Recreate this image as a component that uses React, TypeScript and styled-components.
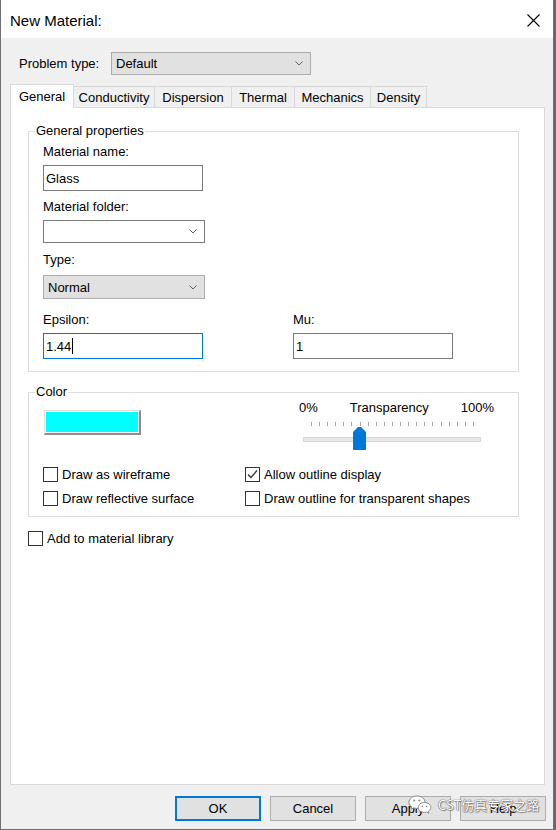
import React from "react";
import styled, { createGlobalStyle } from "styled-components";

const GlobalStyle = createGlobalStyle`
  html, body {
    margin: 0;
    padding: 0;
  }
  body {
    background: #5f6b70;
    font-family: "Liberation Sans", Arial, sans-serif;
    font-size: 13px;
    color: #000;
  }
  * {
    box-sizing: border-box;
  }
`;

const Window = styled.div`
  position: relative;
  width: 554px;
  height: 830px;
  display: flex;
  flex-direction: column;
  background: #f0f0f0;
  border: 1px solid #707070;
  border-top: none;
`;

const TitleBar = styled.div`
  height: 38px;
  flex: none;
  display: flex;
  align-items: center;
  justify-content: space-between;
  padding: 2px 13px 0 9px;
  background: #fff;
  font-size: 15px;
`;

const Body = styled.div`
  flex: 1;
  display: flex;
  flex-direction: column;
  padding: 0 8px 8px 9px;
`;

const ProblemRow = styled.div`
  margin-top: 14px;
  height: 23px;
  display: flex;
  align-items: center;
`;

const ProblemLabel = styled.span`
  width: 101px;
  padding-left: 9px;
`;

const Combo = styled.div<{ $flat?: boolean; $w: number; $h: number }>`
  width: ${(p) => p.$w}px;
  height: ${(p) => p.$h}px;
  display: flex;
  align-items: center;
  padding: 0 7px 0 4px;
  background: ${(p) => (p.$flat ? "#e1e1e1" : "#fff")};
  border: 1px solid ${(p) => (p.$flat ? "#adadad" : "#7a7a7a")};
  svg {
    margin-left: auto;
  }
`;

const TabStrip = styled.div`
  position: relative;
  z-index: 1;
  margin-top: 9px;
  height: 23px;
  display: flex;
  align-items: flex-end;
`;

const Tab = styled.div<{ $active?: boolean; $w: number }>`
  width: ${(p) => p.$w}px;
  height: ${(p) => (p.$active ? 24 : 21)}px;
  margin-bottom: ${(p) => (p.$active ? -1 : 0)}px;
  margin-left: ${(p) => (p.$active ? 0 : -1)}px;
  position: relative;
  z-index: ${(p) => (p.$active ? 2 : 1)};
  display: flex;
  align-items: center;
  justify-content: center;
  padding-top: ${(p) => (p.$active ? 0 : 1)}px;
  background: ${(p) => (p.$active ? "#fff" : "#f0f0f0")};
  border: 1px solid #d9d9d9;
  border-bottom: none;
  &:first-child {
    margin-left: 0;
  }
`;

const Panel = styled.div`
  flex: 1;
  display: flex;
  flex-direction: column;
  padding: 15px 25px 0 17px;
  background: #fff;
  border: 1px solid #d9d9d9;
`;

const Group = styled.fieldset<{ $gap?: number }>`
  margin: ${(p) => p.$gap ?? 0}px 0 0 0;
  padding: 0;
  min-width: 0;
  border: 1px solid #dcdcdc;
`;

const Legend = styled.legend`
  margin-left: 6px;
  padding: 0 1px;
  line-height: 16px;
`;

const GroupBody = styled.div<{ $bottom: number }>`
  display: flex;
  flex-direction: column;
  align-items: flex-start;
  padding: 0 0 ${(p) => p.$bottom}px 14px;
`;

const Label = styled.div<{ $top: number }>`
  margin-top: ${(p) => p.$top}px;
  line-height: 16px;
`;

const TextInput = styled.div<{ $focused?: boolean; $top?: number }>`
  margin-top: ${(p) => p.$top ?? 5}px;
  width: 160px;
  height: 26px;
  display: flex;
  align-items: center;
  padding-left: 2px;
  background: #fff;
  border: 1px solid ${(p) => (p.$focused ? "#0078d7" : "#7a7a7a")};
`;

const Caret = styled.span`
  display: inline-block;
  width: 1px;
  height: 16px;
  margin-left: 1px;
  background: #000;
`;

const Spaced = styled.div<{ $top: number }>`
  margin-top: ${(p) => p.$top}px;
`;

const FieldRow = styled.div`
  margin-top: 13px;
  display: flex;
`;

const Field = styled.div<{ $w?: number }>`
  width: ${(p) => (p.$w ? `${p.$w}px` : "auto")};
  display: flex;
  flex-direction: column;
`;

const TopRow = styled.div`
  display: flex;
  align-items: flex-start;
`;

const Swatch = styled.div<{ $color: string }>`
  margin: 10px 0 0 1px;
  width: 97px;
  height: 25px;
  padding: 1px;
  border-style: solid;
  border-width: 1px 2px 2px 1px;
  border-color: #e3e3e3 #8e8e8e #8e8e8e #e3e3e3;
  background: ${(p) => p.$color};
  background-clip: content-box;
`;

const SliderBlock = styled.div`
  margin-left: 158px;
  width: 195px;
  display: flex;
  flex-direction: column;
`;

const SliderLabels = styled.div`
  display: flex;
  line-height: 16px;
  span:nth-child(2) {
    margin-left: 32px;
  }
  span:last-child {
    margin-left: auto;
  }
`;

const Ticks = styled.div`
  margin: 6px 0 0 12px;
  width: 163px;
  height: 4px;
  display: flex;
  justify-content: space-between;
`;

const Tick = styled.span`
  width: 1px;
  height: 4px;
  background: #a6a6a6;
`;

const TrackWrap = styled.div`
  position: relative;
  margin: 1px 0 0 4px;
  width: 178px;
  height: 23px;
`;

const Track = styled.div`
  margin-top: 10px;
  height: 5px;
  background: #e7eae9;
  border: 1px solid #d6d6d6;
`;

const Thumb = styled.svg`
  position: absolute;
  top: 0;
`;

const CheckGrid = styled.div`
  margin-top: 17px;
  display: grid;
  grid-template-columns: 202px 220px;
  row-gap: 9px;
`;

const CheckItem = styled.label<{ $top?: number }>`
  margin-top: ${(p) => p.$top ?? 0}px;
  display: flex;
  align-items: center;
  gap: 4px;
  height: 15px;
  line-height: 16px;
  white-space: nowrap;
`;

const Box = styled.span`
  width: 15px;
  height: 15px;
  flex: none;
  display: flex;
  align-items: center;
  justify-content: center;
  background: #fff;
  border: 1px solid #333;
`;

const ButtonRow = styled.div`
  margin: 11px -1px 0 0;
  height: 25px;
  display: flex;
  justify-content: flex-end;
  gap: 9px;
`;

const Button = styled.button<{ $primary?: boolean }>`
  width: 86px;
  height: 25px;
  padding: 0;
  font: inherit;
  color: #000;
  background: #e1e1e1;
  border: ${(p) => (p.$primary ? "2px solid #0078d7" : "1px solid #adadad")};
`;

const Watermark = styled.div`
  position: absolute;
  left: 407px;
  top: 795px;
  display: flex;
  align-items: center;
  gap: 6px;
  font-family: "Noto Sans CJK SC", "Noto Sans", sans-serif;
  font-size: 13px;
  color: #fff;
  text-shadow: 0 0 1px #555, 0 0 1px #555, 1px 1px 1px rgba(0, 0, 0, 0.35);
  pointer-events: none;
`;

const Chevron = () => (
  <svg width="8" height="5" viewBox="0 0 8 5">
    <polyline points="0.5,0.5 4,4 7.5,0.5" fill="none" stroke="#606060" strokeWidth="1" />
  </svg>
);

const CloseIcon = () => (
  <svg width="13" height="13" viewBox="0 0 13 13">
    <path d="M0.5 0.5 L12.5 12.5 M12.5 0.5 L0.5 12.5" stroke="#000" strokeWidth="1.1" />
  </svg>
);

const CheckMark = () => (
  <svg width="13" height="13" viewBox="0 0 13 13">
    <polyline points="2,6.5 5,9.5 11,2.5" fill="none" stroke="#333" strokeWidth="1.3" />
  </svg>
);

const WeChatIcon = () => (
  <svg width="24" height="19" viewBox="0 0 24 19">
    <path
      d="M9 1 C4.3 1 1 3.9 1 7.3 C1 9.3 2.1 10.9 3.8 12 L3.1 14.2 L5.8 12.9 C6.8 13.2 7.9 13.4 9 13.4 C13.7 13.4 17 10.6 17 7.2 C17 3.9 13.7 1 9 1 Z"
      fill="#fff"
      stroke="#8a8a8a"
      strokeWidth="1"
    />
    <path
      d="M16.5 7.5 C12.9 7.5 10.3 9.8 10.3 12.5 C10.3 15.2 12.9 17.4 16.5 17.4 C17.3 17.4 18 17.3 18.7 17.1 L20.9 18.2 L20.3 16.3 C21.8 15.4 22.8 14 22.8 12.5 C22.8 9.8 20.1 7.5 16.5 7.5 Z"
      fill="#fff"
      stroke="#8a8a8a"
      strokeWidth="1"
    />
    <circle cx="6.2" cy="5.6" r="1" fill="#8a8a8a" />
    <circle cx="11.4" cy="5.6" r="1" fill="#8a8a8a" />
    <circle cx="14.4" cy="11.4" r="0.8" fill="#8a8a8a" />
    <circle cx="18.6" cy="11.4" r="0.8" fill="#8a8a8a" />
  </svg>
);

const tabs = [
  { name: "General", w: 64 },
  { name: "Conductivity", w: 82 },
  { name: "Dispersion", w: 78 },
  { name: "Thermal", w: 64 },
  { name: "Mechanics", w: 77 },
  { name: "Density", w: 57 },
];

const checks = [
  { text: "Draw as wireframe", on: false },
  { text: "Allow outline display", on: true },
  { text: "Draw reflective surface", on: false },
  { text: "Draw outline for transparent shapes", on: false },
];

function Check({ text, on, top }: { text: string; on?: boolean; top?: number }) {
  return (
    <CheckItem $top={top}>
      <Box>{on && <CheckMark />}</Box>
      <span>{text}</span>
    </CheckItem>
  );
}

export default function App() {
  const transparency = 30;
  // ticks start 7px into the track and span 163px
  const thumbLeft = 7.4 + (transparency / 100) * 162.6 - 6.5;

  return (
    <>
      <GlobalStyle />
      <Window>
        <TitleBar>
          <span>New Material:</span>
          <CloseIcon />
        </TitleBar>
        <Body>
          <ProblemRow>
            <ProblemLabel>Problem type:</ProblemLabel>
            <Combo $flat $w={200} $h={23}>
              <span>Default</span>
              <Chevron />
            </Combo>
          </ProblemRow>

          <TabStrip>
            {tabs.map((t, i) => (
              <Tab key={t.name} $w={t.w} $active={i === 0}>
                {t.name}
              </Tab>
            ))}
          </TabStrip>

          <Panel>
            <Group>
              <Legend>General properties</Legend>
              <GroupBody $bottom={12}>
                <Label $top={5}>Material name:</Label>
                <TextInput>Glass</TextInput>
                <Label $top={8}>Material folder:</Label>
                <Spaced $top={5}>
                  <Combo $w={162} $h={23}>
                    <Chevron />
                  </Combo>
                </Spaced>
                <Label $top={9}>Type:</Label>
                <Spaced $top={7}>
                  <Combo $flat $w={162} $h={24}>
                    <span>Normal</span>
                    <Chevron />
                  </Combo>
                </Spaced>
                <FieldRow>
                  <Field $w={250}>
                    <Label $top={0}>Epsilon:</Label>
                    <TextInput $focused>
                      1.44
                      <Caret />
                    </TextInput>
                  </Field>
                  <Field>
                    <Label $top={0}>Mu:</Label>
                    <TextInput>1</TextInput>
                  </Field>
                </FieldRow>
              </GroupBody>
            </Group>

            <Group $gap={12}>
              <Legend>Color</Legend>
              <GroupBody $bottom={10}>
                <TopRow>
                  <Swatch $color="#00ffff" />
                  <SliderBlock>
                    <SliderLabels>
                      <span>0%</span>
                      <span>Transparency</span>
                      <span>100%</span>
                    </SliderLabels>
                    <Ticks>
                      {Array.from({ length: 21 }, (_, i) => (
                        <Tick key={i} />
                      ))}
                    </Ticks>
                    <TrackWrap>
                      <Track />
                      <Thumb width="13" height="23" viewBox="0 0 13 23" style={{ left: thumbLeft }}>
                        <polygon points="5,0 8,0 13,5 13,23 0,23 0,5" fill="#0078d7" />
                      </Thumb>
                    </TrackWrap>
                  </SliderBlock>
                </TopRow>
                <CheckGrid>
                  {checks.map((c) => (
                    <Check key={c.text} text={c.text} on={c.on} />
                  ))}
                </CheckGrid>
              </GroupBody>
            </Group>

            <Check text="Add to material library" top={14} />
          </Panel>

          <ButtonRow>
            <Button $primary>OK</Button>
            <Button>Cancel</Button>
            <Button>Apply</Button>
            <Button>Help</Button>
          </ButtonRow>
        </Body>

        <Watermark>
          <WeChatIcon />
          <span>CST仿真专家之路</span>
        </Watermark>
      </Window>
    </>
  );
}
